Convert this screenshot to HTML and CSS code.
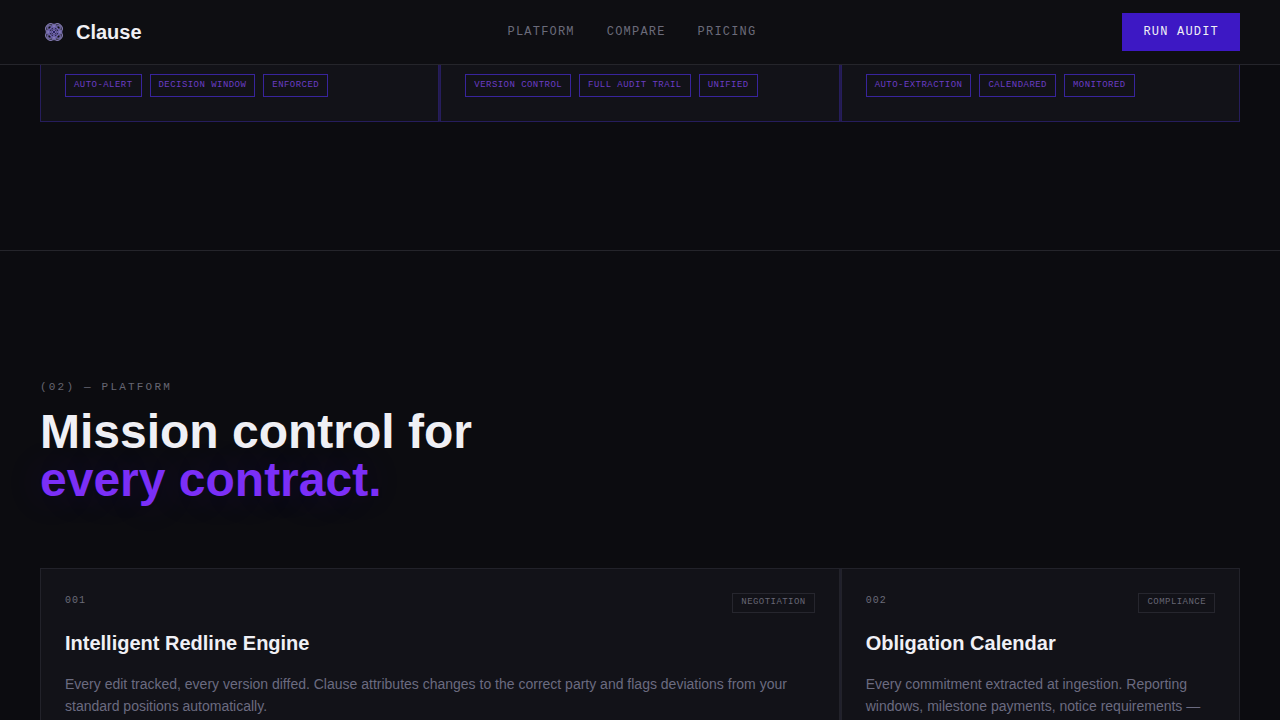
FILE: index.html
```html
<!DOCTYPE html>
<html lang="en">
<head>
  <meta charset="UTF-8" />
  <meta name="viewport" content="width=device-width, initial-scale=1.0">
  <title>Clause</title>
  <link rel="stylesheet" href="styles.css">
</head>
<body>
  <header class="header">
    <a href="#" class="logo">
      <svg class="logo-mark" viewBox="-14 -14 28 28" aria-hidden="true">
        <g class="lobes">
          <ellipse rx="9.4" ry="5" transform="rotate(30)" />
          <ellipse rx="9.4" ry="5" transform="rotate(60)" />
          <ellipse rx="9.4" ry="5" transform="rotate(120)" />
          <ellipse rx="9.4" ry="5" transform="rotate(150)" />
          <circle cx="-4" cy="-4" r="4.2" />
          <circle cx="4" cy="-4" r="4.2" />
          <circle cx="-4" cy="4" r="4.2" />
          <circle cx="4" cy="4" r="4.2" />
        </g>
        <g class="petals">
          <ellipse rx="8" ry="3" />
          <ellipse rx="8" ry="3" transform="rotate(90)" />
          <ellipse rx="8" ry="3" transform="rotate(45)" />
          <ellipse rx="8" ry="3" transform="rotate(135)" />
          <circle r="5" />
        </g>
        <circle class="core" r="1.6" />
      </svg>
      <span>Clause</span>
    </a>
    <nav class="nav">
      <a href="#platform">PLATFORM</a>
      <a href="#compare">COMPARE</a>
      <a href="#pricing">PRICING</a>
    </nav>
    <button type="button" class="btn">RUN AUDIT</button>
  </header>

  <main>
    <section class="section section-solution">
      <div class="grid grid-accent">
        <div class="card card-tags">
          <span class="tag">AUTO-ALERT</span>
          <span class="tag">DECISION WINDOW</span>
          <span class="tag">ENFORCED</span>
        </div>
        <div class="card card-tags">
          <span class="tag">VERSION CONTROL</span>
          <span class="tag">FULL AUDIT TRAIL</span>
          <span class="tag">UNIFIED</span>
        </div>
        <div class="card card-tags">
          <span class="tag">AUTO-EXTRACTION</span>
          <span class="tag">CALENDARED</span>
          <span class="tag">MONITORED</span>
        </div>
      </div>
    </section>

    <section class="section section-platform" id="platform">
      <p class="eyebrow">(02) — PLATFORM</p>
      <h2>Mission control for<br><span class="glow">every contract.</span></h2>

      <div class="grid">
        <article class="card card-wide">
          <div class="card-top">
            <span class="card-num">001</span>
            <span class="badge">NEGOTIATION</span>
          </div>
          <h3>Intelligent Redline Engine</h3>
          <p>Every edit tracked, every version diffed. Clause attributes changes to the correct party and flags deviations from your standard positions automatically.</p>
        </article>
        <article class="card">
          <div class="card-top">
            <span class="card-num">002</span>
            <span class="badge">COMPLIANCE</span>
          </div>
          <h3>Obligation Calendar</h3>
          <p>Every commitment extracted at ingestion. Reporting windows, milestone payments, notice requirements —</p>
        </article>
      </div>
    </section>
  </main>
</body>
</html>
```
FILE: styles.css
```css
* {
  box-sizing: border-box;
  margin: 0;
  padding: 0;
}

body {
  font-family: "Liberation Sans", Arial, sans-serif;
  background-color: #0c0c10;
  color: #f0f0f5;
}

.header {
  position: sticky;
  top: 0;
  z-index: 10;
  display: flex;
  align-items: center;
  justify-content: space-between;
  height: 65px;
  padding: 0 40px;
  background-color: #0e0e12;
  border-bottom: 1px solid #25252b;
}

.logo {
  display: flex;
  align-items: center;
  gap: 8px;
  color: #f0f0f5;
  font-size: 20px;
  font-weight: bold;
  text-decoration: none;
}

.logo-mark {
  width: 28px;
  height: 28px;
  fill: none;
  stroke-width: 0.7;
}

.logo-mark .lobes {
  stroke: #9a90d0;
}

.logo-mark .petals {
  stroke: #6c60b0;
}

.logo-mark .core {
  fill: #1f1850;
  stroke: #8a7ad8;
}

.nav {
  display: flex;
  gap: 32px;
}

.nav a {
  color: #6b6b7a;
  font-family: "Liberation Mono", monospace;
  font-size: 12px;
  letter-spacing: 0.1em;
  text-decoration: none;
}

.btn {
  padding: 12px 20px;
  font-family: "Liberation Mono", monospace;
  font-size: 12px;
  line-height: 12px;
  letter-spacing: 0.1em;
  color: #f0f0f5;
  background-color: #3d18c4;
  border: 1px solid #3d18c4;
  cursor: pointer;
}

.section {
  padding: 128px 40px;
}

.section-solution {
  padding-top: 0;
  border-bottom: 1px solid #25252b;
}

.grid {
  display: grid;
  grid-template-columns: repeat(3, 1fr);
  gap: 1px;
  background-color: #20202c;
}

.grid-accent {
  background-color: #231b50;
}

.card {
  padding: 24px;
  background-color: #121218;
  border: 1px solid #22222a;
}

.card-wide {
  grid-column: span 2;
}

.card-tags {
  display: flex;
  gap: 8px;
  padding-top: 9px;
  border-color: #261d5c;
  border-top: none;
}

.tag,
.badge {
  font-family: "Liberation Mono", monospace;
  font-size: 9px;
  line-height: 11px;
  letter-spacing: 0.05em;
  white-space: nowrap;
}

.tag {
  padding: 5px 8px;
  color: #6a3cc4;
  border: 1px solid #38249c;
}

.badge {
  padding: 3px 8px 4px;
  color: #666674;
  border: 1px solid #26262e;
}

.eyebrow {
  margin-bottom: 12px;
  font-family: "Liberation Mono", monospace;
  font-size: 11px;
  line-height: 17px;
  letter-spacing: 0.2em;
  color: #666672;
}

h2 {
  margin-bottom: 64px;
  font-size: 48px;
  line-height: 48px;
}

.glow {
  color: #7b2ff7;
  text-shadow: 0 0 40px rgba(91, 33, 255, 0.2);
}

.card-top {
  display: flex;
  align-items: flex-start;
  justify-content: space-between;
  margin-bottom: 18px;
}

.card-num {
  font-family: "Liberation Mono", monospace;
  font-size: 10px;
  line-height: 15px;
  letter-spacing: 0.1em;
  color: #6b6b78;
}

h3 {
  margin-bottom: 18px;
  font-size: 20px;
  line-height: 24px;
}

.card p {
  font-size: 14px;
  line-height: 22px;
  color: #6b6b80;
}
```
